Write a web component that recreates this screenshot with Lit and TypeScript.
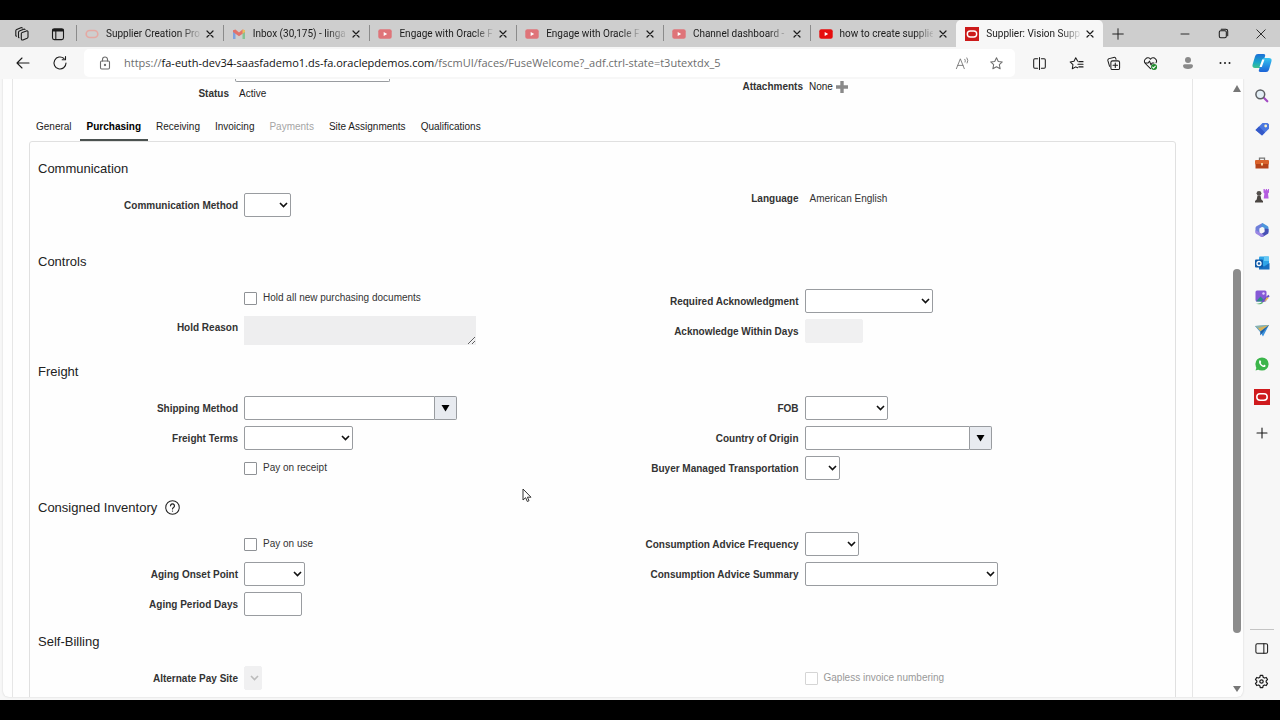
import { LitElement, html, css, svg, nothing, TemplateResult } from "lit";
import { customElement, property } from "lit/decorators.js";
import { classMap } from "lit/directives/class-map.js";

const line = (body: TemplateResult, size = 16) => html`<svg
  width=${size} height=${size} viewBox="0 0 16 16" fill="none" stroke="currentColor"
  stroke-width="1.1" stroke-linecap="round" stroke-linejoin="round" aria-hidden="true">${body}</svg>`;

const glyphs = {
  workspaces: line(svg`<path d="M7.300 7.600q0-.9.900-1.200l4.300-1.500q1.300-.4 1.500.8v5.200q0 .9-.9 1.300l-4.200 1.700q-1.400.5-1.600-.9zM5 11.700l-.5-.3V6.200q0-.9.900-1.300l4.200-1.700q1-.3 1.400.3M2.500 10.200l-.7-.5V4.700q0-.9.900-1.300l4.200-1.700q1-.3 1.400.3"/>`),
  tabActions: line(svg`<rect x="2.500" y="2.800" width="11" height="10.800" rx="1.800"/><path d="M3.300 4.300h9.400" stroke-width="2.400"/><path d="M5.800 5v8.300"/>`),
  close: line(svg`<path d="M4 4l8 8M12 4l-8 8" stroke-width="1.600"/>`, 12),
  plus: line(svg`<path d="M8 2v12M2 8h12"/>`, 14),
  minimize: line(svg`<path d="M4 8h8" stroke-width=".9"/>`),
  restore: line(svg`<rect x="3.500" y="5" width="7.500" height="7.500" rx="1.500"/><path d="M5.500 3.500h5a2 2 0 0 1 2 2v5"/>`, 15),
  shut: line(svg`<path d="M3.800 3.800l8.400 8.400M12.200 3.800l-8.400 8.400" stroke-width=".9"/>`),
  back: line(svg`<path d="M14 8H2M7 3 2 8l5 5"/>`),
  reload: line(svg`<path d="M14 8a6 6 0 1 1-2-4.500M13.500 1.500v3.300h-3.300"/>`),
  lock: line(svg`<rect x="3.500" y="6" width="9" height="8" rx="1.200"/><path d="M5.500 6V4.500a2.500 2.500 0 0 1 5 0V6"/><circle cx="8" cy="10" r=".6" fill="currentColor"/>`),
  readAloud: line(svg`<path d="M1.500 13.500 5.700 3l4.200 10.500M3 10h5.500M10.500 3.500a3 3 0 0 1 .3 3M12.700 2a5 5 0 0 1 .3 5.500" stroke-width=".9"/>`, 15),
  star: line(svg`<path d="M8 1.800l1.900 4 4.300.5-3.200 3 .9 4.300L8 11.500l-3.900 2.100.9-4.300-3.200-3 4.300-.5z"/>`, 15),
  split: line(svg`<path d="M6 3H3a1.200 1.200 0 0 0-1.200 1.200v7.600A1.200 1.200 0 0 0 3 13h3M8 1.500v13M10 3h3a1.200 1.200 0 0 1 1.200 1.200v7.600A1.200 1.200 0 0 1 13 13h-3"/>`, 15),
  favorites: line(svg`<path d="M9.300 5.500 7.200 1.800 5.300 5.700l-4.100.6 3 3-.7 4.300 3.700-2 2 1M10.500 6h4.500M9.500 8.800H15M10.500 11.600H15"/>`, 15),
  collections: line(svg`<rect x="5.200" y="5.200" width="9.300" height="9.300" rx="1.800"/><path d="M9.900 7.500v4.800M7.500 9.900h4.800M3.800 11 2 5a1.800 1.800 0 0 1 1.300-2.200l5-1.300a1.800 1.800 0 0 1 2.200 1.200l.2.800"/>`, 15),
  health: line(svg`<path d="M8 13.500 2.500 8a3.300 3.300 0 0 1 .3-5A3.300 3.300 0 0 1 8 3.500 3.300 3.300 0 0 1 13.300 3a3.300 3.300 0 0 1 .6 4.200M2.500 7.500h3L7 5.500l1.500 4 1.200-2h2"/><circle cx="11.800" cy="11.800" r="3.200" fill="#1d8a2b" stroke="none"/><path d="M10.300 11.900l1 1 1.900-2" stroke="#fff"/>`, 15),
  profile: line(svg`<g fill="#8a8a8a" stroke="none"><circle cx="8" cy="5" r="3"/><path d="M3 10.800A1.600 1.600 0 0 1 4.600 9.200h6.800a1.600 1.600 0 0 1 1.600 1.600C13 13 10.700 14 8 14s-5-1-5-3.200z"/></g>`),
  more: line(svg`<g fill="currentColor" stroke="none"><circle cx="3.500" cy="8" r="1"/><circle cx="8" cy="8" r="1"/><circle cx="12.500" cy="8" r="1"/></g>`),
  copilot: html`<svg width="20" height="20" viewBox="0 0 20 20" aria-hidden="true">
    <defs>
      <linearGradient id="cp1" x1="0" y1="0" x2="0" y2="1"><stop offset="0" stop-color="#1c6fd8"/><stop offset=".6" stop-color="#19a7c8"/><stop offset="1" stop-color="#3fc48a"/></linearGradient>
      <linearGradient id="cp2" x1="0" y1="0" x2="0" y2="1"><stop offset="0" stop-color="#36c5f0"/><stop offset="1" stop-color="#1b62d6"/></linearGradient>
    </defs>
    <path d="M6 1h5.500c1.500 0 2 .8 1.600 2L10 13c-.5 1.500-1.300 2-2.800 2H3c-2 0-3-1.200-2.400-3.500L3 3.500C3.500 1.800 4.500 1 6 1z" fill="url(#cp1)"/>
    <path d="M14 19H8.500c-1.500 0-2-.8-1.600-2L10 7c.5-1.500 1.300-2 2.800-2H17c2 0 3 1.200 2.400 3.500l-2.400 8c-.5 1.700-1.500 2.500-3 2.500z" fill="url(#cp2)"/>
    <path d="M10.200 6.500h2.300L9.800 14H7.500z" fill="#fff"/></svg>`,
  panel: line(svg`<rect x="2" y="3" width="12.500" height="10" rx="1.500"/><path d="M10.500 3v10"/>`, 15),
  gear: line(svg`<path d="M6.700 1.500h2.600l.5 2 1.300.8 2-.6 1.300 2.300L13 7.400v1.200l1.400 1.400-1.300 2.300-2-.6-1.300.8-.5 2H6.700l-.5-2-1.300-.8-2 .6L1.600 10 3 8.600V7.400L1.600 6l1.300-2.300 2 .6 1.300-.8z" stroke-width="1.300"/><circle cx="8" cy="8" r="1.800" stroke-width="1.300"/>`, 15),
  help: line(svg`<circle cx="8" cy="8" r="7.200"/><path d="M5.900 6.200a2.100 2.100 0 1 1 3.200 1.800c-.8.500-1.100.8-1.100 1.600" stroke-width="1.300"/><circle cx="8" cy="11.800" r=".7" fill="currentColor" stroke="none"/>`, 15),
};

const favicons: Record<string, TemplateResult> = {
  oracleLight: html`<svg width="14" height="14" viewBox="0 0 14 14" aria-hidden="true"><rect x="1.200" y="3.500" width="11.600" height="7" rx="3.500" fill="none" stroke="#e5a9a3" stroke-width="1.600"/></svg>`,
  gmail: html`<svg width="14" height="14" viewBox="0 0 14 14" aria-hidden="true"><path d="M1 3.500V12h2.500V6z" fill="#7fa3e0"/><path d="M13 3.500V12h-2.500V6z" fill="#86c394"/><path d="M1 3.200 3.500 2.500 7 5.500l3.500-3 2.500.7V5L7 9.300 1 5z" fill="#e2736b"/><path d="M10.500 2.500 13 3.200V5l-2.500 1.800z" fill="#e8c25f"/></svg>`,
  youtubeLight: html`<svg width="14" height="14" viewBox="0 0 14 14" aria-hidden="true"><rect x=".3" y="2.300" width="13.400" height="9.400" rx="2" fill="#df7479"/><path d="M5.700 5v4l3.500-2z" fill="#fff"/></svg>`,
  youtube: html`<svg width="14" height="14" viewBox="0 0 14 14" aria-hidden="true"><rect x=".3" y="2.300" width="13.400" height="9.400" rx="2" fill="#e60d0d"/><path d="M5.700 5v4l3.500-2z" fill="#fff"/></svg>`,
  oracle: html`<svg width="14" height="14" viewBox="0 0 14 14" aria-hidden="true"><rect width="14" height="14" fill="#cc1b1b"/><rect x="2.300" y="4" width="9.400" height="6" rx="3" fill="none" stroke="#fff" stroke-width="1.400"/></svg>`,
};

const color = (body: TemplateResult) => html`<svg width="16" height="16" viewBox="0 0 16 16" aria-hidden="true">${body}</svg>`;

const railApps: [string, TemplateResult][] = [
  ["Search", color(svg`<path d="M9.800 9.800l3.500 3.500" stroke="#a34bc4" stroke-width="2.200" stroke-linecap="round"/><circle cx="6.300" cy="6.300" r="4.400" fill="#e3eef5" stroke="#5c5f63" stroke-width="1.500"/>`)],
  ["Shopping", color(svg`<path d="M8.500 2h5l1.500 1.200v4.600L8 14.500 1.500 9z" fill="#4a78e0"/><path d="M1.500 9 8 14.500l3-3L5 5.500z" fill="#3559c9"/><circle cx="11.700" cy="5" r="1.400" fill="#fdf3c4"/>`)],
  ["Tools", color(svg`<path d="M5.500 5V3.200h5V5" fill="none" stroke="#777" stroke-width="1.300"/><rect x="1" y="5" width="14" height="4.500" rx="1" fill="#d9622b"/><path d="M1.500 9h13v4.500h-13z" fill="#b5431a"/><rect x="7" y="8" width="2" height="2.500" fill="#f5d7a8"/>`)],
  ["Games", color(svg`<path d="M9.500 1h1.300v1.200h1V1h1.300v1.200h.9V1h1v3.500l-1 1 .6 5H9.700l.7-5-.9-1z" fill="#b45be0"/><circle cx="5" cy="5.300" r="2.400" fill="#55504d"/><path d="M3.500 7.500h3l.8 4 1.700 1.500v1.500H1V13l1.700-1.500z" fill="#4b4643"/>`)],
  ["Microsoft 365", color(svg`<path d="M8.500 1 2.500 4.300Q1.500 5 1.500 6v4.500L5.500 13V6.300L10 4z" fill="#6f7fd9"/><path d="M8.500 1l5 3q1 .7 1 2v4L10.500 8V6L7 4.200z" fill="#4d96dd"/><path d="M14.500 7v3.500q0 1-1 1.500L9 14.700q-1 .5-2 0L5.500 13l5-3V6.500z" fill="#4750b5"/><path d="M1.500 8v2.500q0 1 1 1.500L7 14.700q.8.400 1.500.2L10 13 5.500 10.500z" fill="#9b86e3"/><path d="M8 5.700l2.300 1.300v2.300L8 10.600 5.700 9.300V7z" fill="#f7f7f7"/>`)],
  ["Outlook", color(svg`<rect x="5" y="1.500" width="10" height="12" rx="1" fill="#2fa4e7"/><path d="M5 8l5 3.500L15.500 8v6.500H5z" fill="#176fc1"/><path d="M10 1.500h5V6h-5z" fill="#64c8f5"/><rect x="1" y="4.500" width="8" height="8" rx="1" fill="#0f5aa8"/><circle cx="5" cy="8.500" r="2" fill="none" stroke="#fff" stroke-width="1.300"/>`)],
  ["Image Creator", color(svg`<rect x="1.500" y="1.500" width="11" height="11" rx="1.500" fill="#8659d6"/><path d="M2 12.500l4.500-5 5 5z" fill="#2d8a86"/><circle cx="9.500" cy="4.500" r="1.200" fill="#e4d4ff"/><path d="M15 6.500 8 13" stroke="#6c50c8" stroke-width="2"/><path d="M1 14.500c3 .5 5 0 7-1.800l1 1.300c-2 1.500-5 1.700-8 .5z" fill="#53b06a"/><path d="M13 8l1.500 1.500L10 13z" fill="#f0c04a"/>`)],
  ["Drop", color(svg`<path d="M1 4l14-1-6 11.500-2.500-4z" fill="#3d93dc"/><path d="M1 4l14-1L6.500 9z" fill="#8fb3a6"/><path d="M4 6.300 15 3 6.500 9.500z" fill="#d9b25a"/><path d="M15 3 6.500 9.500 6 13.500l2.500-2.800z" fill="#1d5fa8"/>`)],
  ["WhatsApp", color(svg`<circle cx="8" cy="8" r="6.600" fill="#3bb54a"/><path d="M1.500 14.500l1.300-4 3 2.700z" fill="#3bb54a"/><path d="M5.300 4.700c1-1 1.500.4 1.900 1.200.1.500-.7.900-.5 1.200.6 1.100 1.300 1.800 2.400 2.300.4.200.8-.9 1.300-.7 1 .4 1.600.9.900 1.800-1 1-2.700.5-4.300-.8S4.500 6 5.300 4.700z" fill="#fff"/>`)],
  ["Oracle", color(svg`<rect width="16" height="16" fill="#cf1a1d"/><rect x="2.800" y="4.800" width="10.400" height="6.400" rx="3.200" fill="none" stroke="#fff" stroke-width="1.500"/>`)],
];

@customElement("form-row")
class FormRow extends LitElement {
  @property() label = "";
  @property() kind: "select" | "text" | "combo" | "check" | "area" | "static" = "text";
  @property() size = "";
  @property({ type: Boolean }) off = false;

  static styles = css`
    :host { display: grid; grid-template-columns: 200px 1fr; column-gap: 6px; align-items: center; min-height: 30px; color: #333; }
    .label { text-align: right; font-weight: bold; padding-top: 2px; }
    .label.plain { padding-top: 0; }
    .label.top { align-self: start; padding-top: 0; line-height: 30px; }
    .box { box-sizing: border-box; height: 24px; margin: 0; border: 1px solid #999ca0; border-radius: 2px; background: #fff; font: inherit; padding: 0 4px; width: 100%; appearance: none; }
    .box:disabled { background: #f0f0f1; border-color: #f0f0f1; opacity: 1; }
    .wrap { display: grid; justify-items: end; align-items: center; }
    .wrap > * { grid-area: 1 / 1; }
    .chevron { pointer-events: none; margin-right: 3px; color: #111; }
    .faded { color: #bbb; }
    .w18 { width: 18px; } .w35 { width: 35px; } .w47 { width: 47px; } .w54 { width: 54px; } .w58 { width: 58px; } .w61 { width: 61px; }
    .w83 { width: 83px; } .w109 { width: 109px; } .w128 { width: 128px; } .w187 { width: 187px; } .w193 { width: 193px; } .w213 { width: 213px; } .w232 { width: 232px; }
    .combo { display: flex; }
    .combo .box { flex: 1; min-width: 0; border-radius: 2px 0 0 2px; }
    .drop { box-sizing: border-box; flex: none; width: 22px; height: 24px; border: 1px solid #999ca0; border-left: 0; border-radius: 0 2px 2px 0; background: #e8ebf0; padding: 0; display: grid; place-items: center; }
    .area { box-sizing: border-box; display: block; height: 29px; border: 0; background: #eeeeef; margin: 0; padding: 2px; }
    .check { display: flex; align-items: center; gap: 6px; grid-column: 2; }
    .tick { appearance: none; box-sizing: border-box; width: 13px; height: 13px; border: 1px solid #8f9296; border-radius: 1px; background: #fff; margin: 0; }
    .tick:disabled { border-color: #d5d5d5; }
    .muted { color: #999; }
    .value { padding-left: 5px; color: #333; }
  `;

  private control() {
    const w = { ["w" + this.size]: true };
    switch (this.kind) {
      case "select":
        return html`<span class=${classMap({ wrap: true, ...w })}>
          <select id="c" class="box" ?disabled=${this.off}><option></option></select>
          <svg class=${classMap({ chevron: true, faded: this.off })} width="9" height="8" viewBox="0 0 9 8" fill="none" stroke="currentColor" stroke-width="1.600" aria-hidden="true"><path d="M1 2l3.500 3.600L8 2"/></svg>
        </span>`;
      case "combo":
        return html`<span class=${classMap({ combo: true, ...w })}>
          <input id="c" class="box" type="text" /><button class="drop" aria-label="Search ${this.label}">
          <svg width="9" height="8" viewBox="0 0 9 8" aria-hidden="true"><path d="M.5 1h8l-4 6.500z" fill="#000"/></svg></button></span>`;
      case "area":
        return html`<textarea id="c" class=${classMap({ area: true, ...w })} readonly></textarea>`;
      case "static":
        return html`<span class="value"><slot></slot></span>`;
      default:
        return html`<span class=${classMap(w)}><input id="c" class="box" type="text" ?disabled=${this.off} /></span>`;
    }
  }

  render() {
    if (this.kind === "check") {
      return html`<label class=${classMap({ check: true, muted: this.off })}><input class="tick" type="checkbox" ?disabled=${this.off} />${this.label}</label>`;
    }
    return this.kind === "static"
      ? html`<span class="label plain">${this.label}</span>${this.control()}`
      : html`<label class=${classMap({ label: true, top: this.kind === "area" })} for="c">${this.label}</label>${this.control()}`;
  }
}

@customElement("app-root")
class AppRoot extends LitElement {
  static styles = css`
    :host { display: flex; flex-direction: column; box-sizing: border-box; height: 100vh; padding: 20px 0; background: #000; overflow: hidden; position: relative; color: #1b1b1b; font: 10px/16px Roboto, "Noto Sans", sans-serif; }
    button { font: inherit; color: inherit; background: none; border: 0; padding: 0; margin: 0; display: grid; place-items: center; flex: none; }
    svg { display: block; flex: none; }

    .strip { display: flex; align-items: stretch; height: 27px; flex: none; background: #cecece; padding-left: 4px; }
    .stripIcon { width: 36px; }
    .tabs { display: flex; flex: 0 1 1027px; min-width: 0; }
    .tab { display: flex; flex: 1 1 0; min-width: 0; align-items: center; padding-left: 9px; gap: 7px; position: relative; }
    .tab::before { content: ""; position: absolute; left: 0; top: 5px; bottom: 6px; width: 1px; background: #8b8b8b; }
    .tab.active { background: #f7f7f7; border-radius: 5px 5px 0 0; }
    .tab.active::before { display: none; }
    .tabLabel { flex: 1; min-width: 0; overflow: hidden; white-space: nowrap; display: block; text-align: left; -webkit-mask-image: linear-gradient(90deg, #000 80%, rgba(0, 0, 0, 0.1)); mask-image: linear-gradient(90deg, #000 80%, rgba(0, 0, 0, 0.1)); }
    .tabClose { width: 20px; height: 24px; margin: 0 3px 0 -7px; }
    .add { width: 30px; }
    .windowControls { display: flex; margin-left: auto; }
    .winBtn { width: 38px; }

    .toolbar { display: flex; align-items: center; flex: none; height: 32px; padding-left: 4px; background: #f7f7f7; }
    .tool { width: 37px; height: 28px; }
    .address { display: flex; align-items: center; flex: 1; min-width: 0; height: 28px; border-radius: 5px; background: #fff; margin: 0 6px; padding: 0 2px 0 13px; color: #6d6d6d; }
    .url { flex: 1; min-width: 0; margin-left: 11px; white-space: nowrap; overflow: hidden; font: 11px/16px "Open Sans", "Noto Sans", sans-serif; }
    .host { color: #111; }
    .addressBtn { width: 34px; }

    .body { display: flex; flex: 1; min-height: 0; background: #f7f7f7; }
    .view { display: flex; flex: 1; min-width: 0; margin: 0 0 3px 3px; background: #fefefe; border-radius: 0 0 6px 6px; box-shadow: 0 0 2px #ccc; overflow: hidden; clip-path: inset(0 -2px -3px -2px); }
    .page { flex: 1; min-width: 0; margin: 0 38px 0 9px; border: solid #e6e6e6; border-width: 0 1px; padding: 0 16px; font: 10px/16px "Liberation Sans", Arial, sans-serif; }
    .scroll { display: flex; flex-direction: column; align-items: center; width: 12px; flex: none; padding: 6px 0 5px; }
    .before { flex: 177; } .thumb { flex: 363; width: 8px; border-radius: 4px; background: #8c8c8c; } .after { flex: 52; }

    .summary { display: grid; grid-template-columns: 1fr 1fr; height: 31px; padding: 0 15px 0 8px; }
    .fragment { display: grid; grid-template-columns: 192px 1fr; column-gap: 10px; align-content: start; }
    .clipped { box-sizing: border-box; grid-column: 2; width: 155px; height: 3px; border: 1px solid #999ca0; border-top: 0; border-radius: 0 0 2px 2px; padding: 0; margin-left: -4px; background: #fff; }
    .strong { text-align: right; font-weight: bold; color: #333; }
    .statusLine { padding-top: 4px; }
    .attach { display: grid; grid-template-columns: 204px auto auto; column-gap: 6px; place-content: start; align-items: center; }
    .attachAdd { margin-left: -3px; }

    .sections { display: flex; gap: 1px; height: 31px; }
    .section { padding: 4px 7px 0; height: 31px; border-bottom: 2px solid transparent; box-sizing: border-box; color: #1c1c1c; }
    .section.current { font-weight: bold; border-bottom-color: #4b5250; color: #000; }
    .section:disabled { color: #a5a5a5; }

    .panel { border: 1px solid #e0e0e0; border-radius: 3px; padding: 14px 16px 24px 8px; }
    .title { display: flex; align-items: center; gap: 8px; box-sizing: border-box; height: 24px; margin: 0 0 10px; padding-top: 1px; font-size: 13px; font-weight: normal; color: #222; }
    .columns { display: grid; grid-template-columns: 1fr 1fr; margin-bottom: 12px; align-items: start; }
    .columns.tight { margin-bottom: 10px; }
    .columns.wide { margin-bottom: 29px; }
    .lowered { padding-top: 3px; }
    .short { min-height: 17px; }
    .reason { min-height: 34px; }

    .rail { display: flex; flex-direction: column; align-items: center; width: 37px; flex: none; padding: 9px 0 8px; box-sizing: border-box; }
    .apps { display: flex; flex-direction: column; justify-content: space-between; height: 317px; }
    .railAdd { margin-top: 20px; }
    .divider { width: 24px; height: 1px; background: #c4c4c4; margin: auto 0 10px; }
    .railTool { height: 16px; margin-bottom: 17px; }
    .railTool.last { margin-bottom: 3px; }

    .pointer { position: absolute; left: 522px; top: 488px; }
  `;

  private tab(icon: string, text: string, active = false) {
    return html`<div class=${classMap({ tab: true, active })}>
      ${favicons[icon]}<button class="tabLabel">${text}</button>
      <button class="tabClose" aria-label="Close tab">${glyphs.close}</button>
    </div>`;
  }

  private section(text: string, state = "") {
    return html`<button class=${classMap({ section: true, current: state === "current" })} role="tab"
      aria-selected=${state === "current"} ?disabled=${state === "off"}>${text}</button>`;
  }

  private title(text: string, help = false) {
    return html`<h2 class="title">${text}${help ? html`<button aria-label="Help">${glyphs.help}</button>` : nothing}</h2>`;
  }

  render() {
    return html`
      <div class="strip">
        <button class="stripIcon" aria-label="Workspaces">${glyphs.workspaces}</button>
        <button class="stripIcon" aria-label="Tab actions">${glyphs.tabActions}</button>
        <div class="tabs">
          ${this.tab("oracleLight", "Supplier Creation Pro")}
          ${this.tab("gmail", "Inbox (30,175) - linga")}
          ${this.tab("youtubeLight", "Engage with Oracle F")}
          ${this.tab("youtubeLight", "Engage with Oracle F")}
          ${this.tab("youtubeLight", "Channel dashboard -")}
          ${this.tab("youtube", "how to create supplie")}
          ${this.tab("oracle", "Supplier: Vision Supp", true)}
        </div>
        <button class="add" aria-label="New tab">${glyphs.plus}</button>
        <div class="windowControls">
          <button class="winBtn" aria-label="Minimize">${glyphs.minimize}</button>
          <button class="winBtn" aria-label="Restore">${glyphs.restore}</button>
          <button class="winBtn" aria-label="Close">${glyphs.shut}</button>
        </div>
      </div>

      <div class="toolbar">
        <button class="tool" aria-label="Back">${glyphs.back}</button>
        <button class="tool" aria-label="Reload">${glyphs.reload}</button>
        <div class="address">
          ${glyphs.lock}
          <span class="url">https://<span class="host">fa-euth-dev34-saasfademo1.ds-fa.oraclepdemos.com</span>/fscmUI/faces/FuseWelcome?_adf.ctrl-state=t3utextdx_5</span>
          <button class="addressBtn" aria-label="Read aloud">${glyphs.readAloud}</button>
          <button class="addressBtn" aria-label="Add to favorites">${glyphs.star}</button>
        </div>
        <button class="tool" aria-label="Split screen">${glyphs.split}</button>
        <button class="tool" aria-label="Favorites">${glyphs.favorites}</button>
        <button class="tool" aria-label="Collections">${glyphs.collections}</button>
        <button class="tool" aria-label="Browser essentials">${glyphs.health}</button>
        <button class="tool" aria-label="Profile">${glyphs.profile}</button>
        <button class="tool" aria-label="More">${glyphs.more}</button>
        <button class="tool" aria-label="Copilot">${glyphs.copilot}</button>
      </div>

      <div class="body">
        <div class="view">
          <main class="page">
            <div class="summary">
              <div class="fragment">
                <input class="clipped" type="text" aria-label="Site name" />
                <span class="strong statusLine">Status</span><span class="statusLine">Active</span>
              </div>
              <div class="attach">
                <span class="strong">Attachments</span><span>None</span>
                <button class="attachAdd" aria-label="Add attachment"><svg width="12" height="12" viewBox="0 0 12 12" aria-hidden="true"><path d="M6 0v12M0 6h12" stroke="#8a8a8a" stroke-width="3.400"/></svg></button>
              </div>
            </div>

            <div class="sections" role="tablist">
              ${this.section("General")}${this.section("Purchasing", "current")}${this.section("Receiving")}
              ${this.section("Invoicing")}${this.section("Payments", "off")}${this.section("Site Assignments")}
              ${this.section("Qualifications")}
            </div>

            <div class="panel">
              ${this.title("Communication")}
              <div class="columns wide">
                <form-row kind="select" size="47" label="Communication Method"></form-row>
                <form-row class="short" kind="static" label="Language">American English</form-row>
              </div>

              ${this.title("Controls")}
              <div class="columns">
                <div>
                  <form-row kind="check" label="Hold all new purchasing documents"></form-row>
                  <form-row class="reason" kind="area" size="232" label="Hold Reason"></form-row>
                </div>
                <div class="lowered">
                  <form-row kind="select" size="128" label="Required Acknowledgment"></form-row>
                  <form-row size="58" label="Acknowledge Within Days" off></form-row>
                </div>
              </div>

              ${this.title("Freight")}
              <div class="columns">
                <div>
                  <form-row kind="combo" size="213" label="Shipping Method"></form-row>
                  <form-row kind="select" size="109" label="Freight Terms"></form-row>
                  <form-row kind="check" label="Pay on receipt"></form-row>
                </div>
                <div>
                  <form-row kind="select" size="83" label="FOB"></form-row>
                  <form-row kind="combo" size="187" label="Country of Origin"></form-row>
                  <form-row kind="select" size="35" label="Buyer Managed Transportation"></form-row>
                </div>
              </div>

              ${this.title("Consigned Inventory", true)}
              <div class="columns tight">
                <div>
                  <form-row kind="check" label="Pay on use"></form-row>
                  <form-row kind="select" size="61" label="Aging Onset Point"></form-row>
                  <form-row size="58" label="Aging Period Days"></form-row>
                </div>
                <div>
                  <form-row kind="select" size="54" label="Consumption Advice Frequency"></form-row>
                  <form-row kind="select" size="193" label="Consumption Advice Summary"></form-row>
                </div>
              </div>

              ${this.title("Self-Billing")}
              <div class="columns">
                <form-row kind="select" size="18" label="Alternate Pay Site" off></form-row>
                <form-row kind="check" label="Gapless invoice numbering" off></form-row>
              </div>
            </div>
          </main>
          <div class="scroll" aria-hidden="true">
            <svg width="8" height="7" viewBox="0 0 8 7"><path d="M4 0l4 7H0z" fill="#777"/></svg>
            <div class="before"></div><div class="thumb"></div><div class="after"></div>
            <svg width="8" height="7" viewBox="0 0 8 7"><path d="M4 7l4-6H0z" fill="#777"/></svg>
          </div>
        </div>

        <nav class="rail">
          <div class="apps">${railApps.map(([name, icon]) => html`<button aria-label=${name}>${icon}</button>`)}</div>
          <button class="railAdd" aria-label="Customize">${line(svg`<path d="M8 3v10M3 8h10"/>`)}</button>
          <div class="divider"></div>
          <button class="railTool" aria-label="Sidebar">${glyphs.panel}</button>
          <button class="railTool last" aria-label="Settings">${glyphs.gear}</button>
        </nav>
      </div>

      <svg class="pointer" width="10" height="15" viewBox="0 0 10 15" aria-hidden="true"><path d="M1 1v11l2.600-2.300L5.300 13.500l1.700-.8-1.600-3.500H9z" fill="#fff" stroke="#333" stroke-width="1"/></svg>
    `;
  }
}
